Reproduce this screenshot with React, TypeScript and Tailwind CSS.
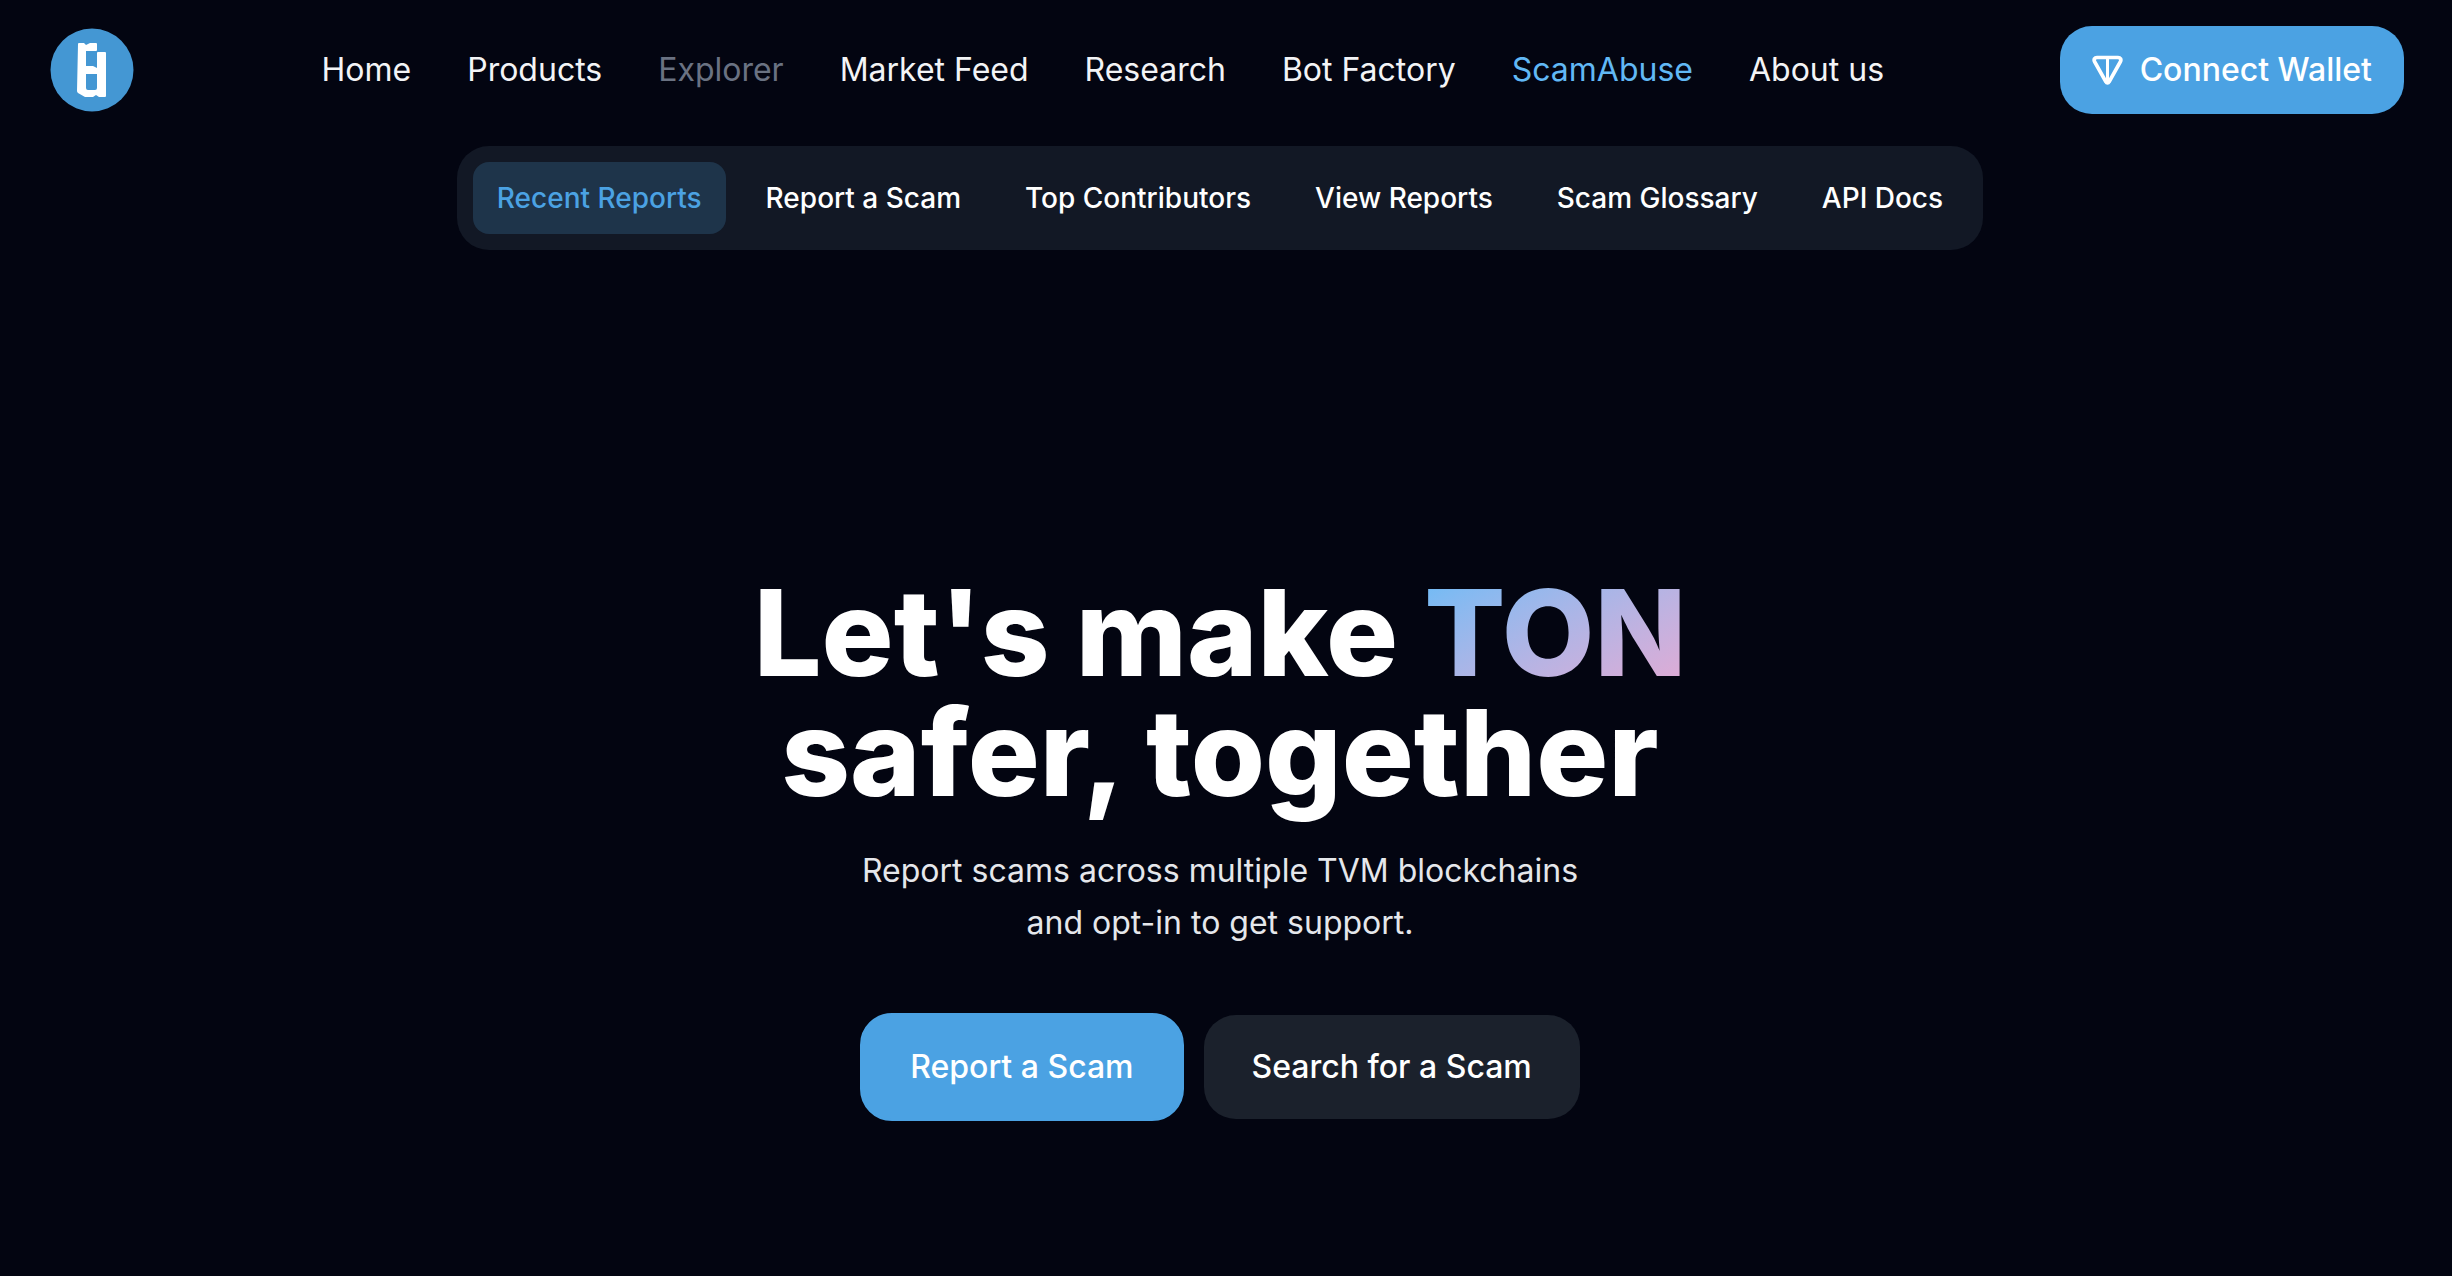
const navItems = [
  { href: "#home", label: "Home", tone: "text-gray-100" },
  { href: "#products", label: "Products", tone: "text-gray-100" },
  { href: "#explorer", label: "Explorer", tone: "text-gray-500" },
  { href: "#market-feed", label: "Market Feed", tone: "text-gray-100" },
  { href: "#research", label: "Research", tone: "text-gray-100" },
  { href: "#bot-factory", label: "Bot Factory", tone: "text-gray-100" },
  { href: "#scamabuse", label: "ScamAbuse", tone: "text-[#61b8f5]" },
  { href: "#about", label: "About us", tone: "text-gray-100" },
];

const tabs = [
  { href: "#recent", label: "Recent Reports", active: true },
  { href: "#report", label: "Report a Scam" },
  { href: "#contributors", label: "Top Contributors" },
  { href: "#reports", label: "View Reports" },
  { href: "#glossary", label: "Scam Glossary" },
  { href: "#api", label: "API Docs" },
];

function Logo() {
  return (
    <svg viewBox="0 0 84 84" className="size-21" aria-hidden="true">
      <circle cx="42" cy="42" r="41.5" fill="#4497d3" />
      <path
        fill="#fff"
        fillRule="evenodd"
        d="M28 16q0-1 1-1h5l2 2 4-2h6q1 0 1 1v6q0 1-1 1H36v15h7l4 2V25q0-1 1-1h7q1 0 1 1v43q0 1-1 1h-6l-3-2-3 2h-8l-7-4q-1-1-1-2zM36 46v14q0 2 2 2h7q2 0 2-2V46z"
      />
    </svg>
  );
}

function TonIcon() {
  return (
    <svg
      viewBox="0 0 32 32"
      className="size-8"
      fill="none"
      stroke="currentColor"
      strokeLinejoin="round"
      aria-hidden="true"
    >
      <path
        strokeWidth="3.6"
        d="M5 3.500h21c2.500 0 3.500 2 2.500 4L17 28c-.6 1.200-2.400 1.200-3 0L2.500 7.500c-1-2 0-4 2.500-4z"
      />
      <path strokeWidth="3" d="M15.500 3.500v25" />
    </svg>
  );
}

function Header() {
  return (
    <header className="flex items-center justify-between pt-[26px] pl-[50px] pr-9">
      <a href="#home" aria-label="Home">
        <Logo />
      </a>
      <nav className="pl-3">
        <ul className="flex gap-14 text-[32px] leading-12">
          {navItems.map(({ href, label, tone }) => (
            <li key={href}>
              <a href={href} className={tone}>
                {label}
              </a>
            </li>
          ))}
        </ul>
      </nav>
      <button className="flex items-center gap-4 rounded-[32px] bg-[#4ba2e3] px-8 py-5 text-[32px] leading-12 font-medium">
        <TonIcon />
        Connect Wallet
      </button>
    </header>
  );
}

function SubNav() {
  return (
    <nav className="mt-8 flex justify-center">
      <ul className="flex gap-4 rounded-[32px] bg-[#121825] p-4 text-[28px] leading-10 font-medium">
        {tabs.map(({ href, label, active }) => (
          <li key={href}>
            <a
              href={href}
              className={
                active
                  ? "block rounded-2xl bg-[#1e344a] px-6 py-4 text-[#4ba2e3]"
                  : "block rounded-2xl px-6 py-4"
              }
            >
              {label}
            </a>
          </li>
        ))}
      </ul>
    </nav>
  );
}

function Hero() {
  return (
    <main className="flex flex-col items-center pt-[323px] text-center">
      <h1 className="text-[120px] leading-[120px] font-extrabold [font-optical-sizing:none]">
        Let's make{" "}
        <span className="bg-linear-to-br from-[#60bcf8] to-[#e8a9d2] bg-clip-text text-transparent">
          TON
        </span>
        <br />
        safer, together
      </h1>
      <p className="mt-8 text-[32px] leading-[52px] text-gray-200">
        Report scams across multiple TVM blockchains
        <br />
        and opt-in to get support.
      </p>
      <div className="mt-16 flex items-center gap-5 text-[32px] leading-12 font-medium">
        <button className="rounded-[32px] border-2 border-[#4ba2e3] bg-[#4ba2e3] px-12 py-7">
          Report a Scam
        </button>
        <button className="rounded-[32px] bg-[#1b212c] px-12 py-7">
          Search for a Scam
        </button>
      </div>
    </main>
  );
}

export default function App() {
  return (
    <div className="min-h-screen bg-[#030511] pr-3 font-['Inter',sans-serif] text-white">
      <Header />
      <SubNav />
      <Hero />
    </div>
  );
}
